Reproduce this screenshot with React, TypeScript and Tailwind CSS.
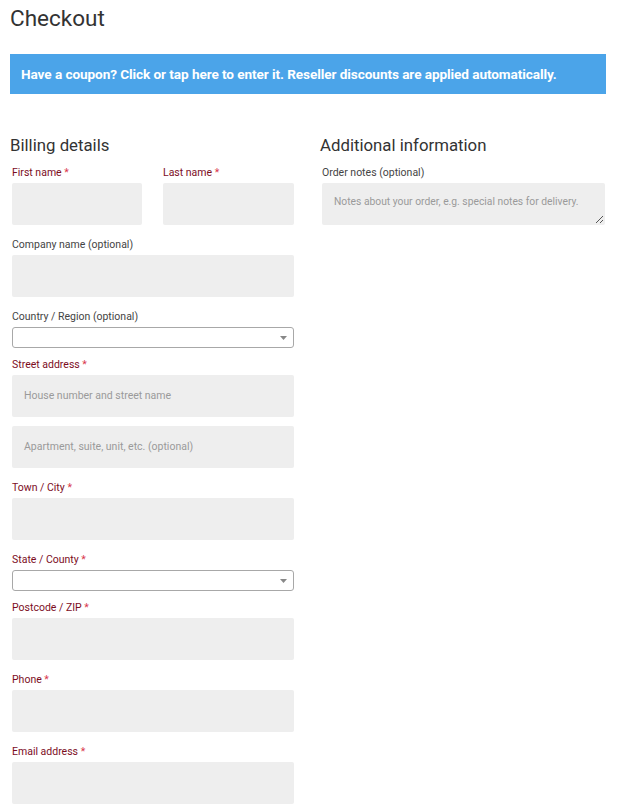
import React from "react";

const font = { fontFamily: "Roboto, 'Liberation Sans', sans-serif" };

function Label({ text, required }: { text: string; required?: boolean }) {
  return (
    <label
      className={`block pt-[1px] text-[10.5px] leading-[21px] ${required ? "text-[#7c0d1e]" : "text-[#444444]"}`}
    >
      {text}
      {required && <span className="text-[#d9364b]"> *</span>}
    </label>
  );
}

function Input({ placeholder }: { placeholder?: string }) {
  return (
    <div className="h-[42px] w-full rounded-[2px] bg-[#eeeeee] px-[12px] flex items-center text-[10.5px] text-[#9a9a9a]">
      {placeholder}
    </div>
  );
}

function Select() {
  return (
    <div className="h-[21px] w-full rounded-[3px] border border-[#a8a8a8] bg-white flex items-center justify-end pr-[6px]">
      <svg width="7" height="4" viewBox="0 0 7 4">
        <path d="M0 0 L7 0 L3.5 4 Z" fill="#888" />
      </svg>
    </div>
  );
}

function Row({ children, mb = "mb-[8px]" }: { children: React.ReactNode; mb?: string }) {
  return <div className={`px-[2px] ${mb}`}>{children}</div>;
}

export default function App() {
  return (
    <div style={font} className="w-[618px] h-[810px] overflow-hidden bg-white text-[#333333]">
      <div className="ml-[10px] w-[596px]">
        <h1 className="pt-[4px] text-[22.5px] leading-[29px] font-normal text-[#333333]">Checkout</h1>
        <div className="mt-[21px] h-[40px] bg-[#4ba4e9] flex items-center pl-[11px] text-white text-[13.6px] font-bold tracking-[-0.08px]">
          Have a coupon? Click or tap here to enter it. Reseller discounts are applied automatically.
        </div>
        <div className="mt-[40px] flex justify-between">
          <div className="w-[286px]">
            <h3 className="text-[16.8px] leading-[22px] font-normal text-[#333333] mb-[5px]">Billing details</h3>
            <div className="flex justify-between px-[2px] mb-[8px]">
              <div className="w-[130px]">
                <Label text="First name" required />
                <Input />
              </div>
              <div className="w-[131px]">
                <Label text="Last name" required />
                <Input />
              </div>
            </div>
            <Row>
              <Label text="Company name (optional)" />
              <Input />
            </Row>
            <Row mb="mb-[5px]">
              <Label text="Country / Region (optional)" />
              <Select />
            </Row>
            <Row>
              <Label text="Street address" required />
              <Input placeholder="House number and street name" />
              <div className="h-[9px]" />
              <Input placeholder="Apartment, suite, unit, etc. (optional)" />
            </Row>
            <Row>
              <Label text="Town / City" required />
              <Input />
            </Row>
            <Row mb="mb-[5px]">
              <Label text="State / County" required />
              <Select />
            </Row>
            <Row>
              <Label text="Postcode / ZIP" required />
              <Input />
            </Row>
            <Row>
              <Label text="Phone" required />
              <Input />
            </Row>
            <Row>
              <Label text="Email address" required />
              <Input />
            </Row>
          </div>
          <div className="w-[286px]">
            <h3 className="text-[16.8px] leading-[22px] font-normal text-[#333333] mb-[5px]">Additional information</h3>
            <Row>
              <Label text="Order notes (optional)" />
              <div className="relative h-[42px] w-[283px] rounded-[2px] bg-[#eeeeee] px-[12px] pt-[12px] text-[10.3px] leading-[14px] whitespace-nowrap text-[#9a9a9a]">
                Notes about your order, e.g. special notes for delivery.
                <svg className="absolute right-[1px] bottom-[1px]" width="9" height="9" viewBox="0 0 9 9">
                  <path d="M8 1 L1 8 M8 5 L5 8" stroke="#555" strokeWidth="1" />
                </svg>
              </div>
            </Row>
          </div>
        </div>
      </div>
    </div>
  );
}
